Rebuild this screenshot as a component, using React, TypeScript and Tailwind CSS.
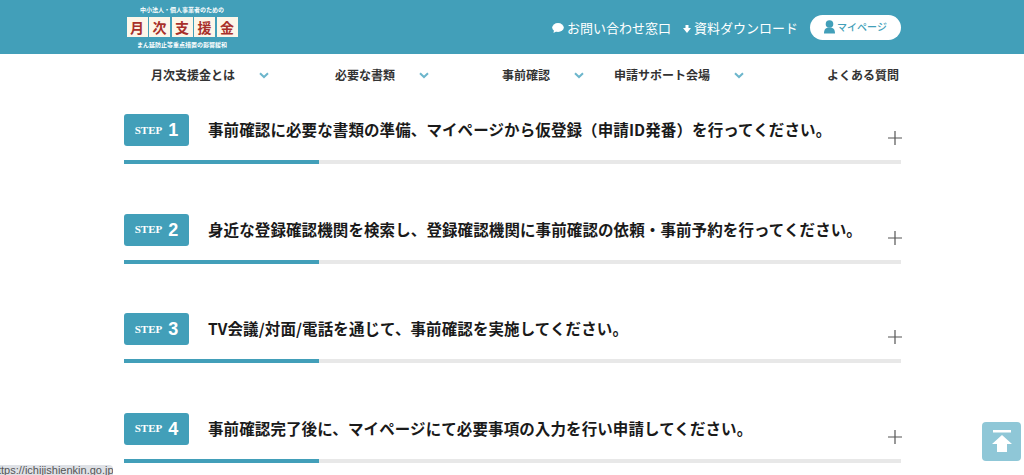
const font = { fontFamily: '"Noto Sans CJK JP", "Noto Sans", sans-serif' };

const logoChars = ["月", "次", "支", "援", "金"];

const navItems = [
  { label: "月次支援金とは", w: "w-[160px]", chevron: true },
  { label: "必要な書類", w: "w-[160px]", chevron: true },
  { label: "事前確認", w: "w-[155px]", chevron: true },
  { label: "申請サポート会場", w: "w-[160px]", chevron: true },
  { label: "よくある質問", w: "w-[160px]", chevron: false },
];

const steps = [
  { n: 1, text: "事前確認に必要な書類の準備、マイページから仮登録（申請ID発番）を行ってください。" },
  { n: 2, text: "身近な登録確認機関を検索し、登録確認機関に事前確認の依頼・事前予約を行ってください。" },
  { n: 3, text: "TV会議/対面/電話を通じて、事前確認を実施してください。" },
  { n: 4, text: "事前確認完了後に、マイページにて必要事項の入力を行い申請してください。" },
];

function Chevron() {
  return (
    <svg width="10" height="7" viewBox="0 0 10 7" className="shrink-0">
      <path d="M1 1.2 L5 5 L9 1.2" fill="none" stroke="#6cb6cc" strokeWidth="2" />
    </svg>
  );
}

function Step({ n, text }: { n: number; text: string }) {
  return (
    <div className="h-[99.5px]">
      <div className="flex h-[32px] items-start">
        <div className="flex h-[32px] w-[65px] shrink-0 items-center justify-center gap-[6px] rounded-[3px] bg-[#429fb9] font-bold text-white">
          <span className="text-[11px] leading-none" style={{ fontFamily: '"Liberation Serif", serif' }}>STEP</span>
          <span className="text-[18px] leading-none" style={{ fontFamily: '"Liberation Sans", sans-serif' }}>{n}</span>
        </div>
        <p className="ml-[19px] flex-1 text-[15.5px] font-bold leading-[30px] tracking-[0.1px] text-[#1a1a1a]">{text}</p>
        <svg width="14" height="14" viewBox="0 0 14 14" className="mt-[17px] mr-[-1px] shrink-0">
          <path d="M7 0 V14 M0 7 H14" stroke="#555" strokeWidth="1.2" />
        </svg>
      </div>
      <div className="mt-[14px] h-[4px] bg-[#e8e8e8]">
        <div className="h-full w-[195px] bg-[#429fb9]" />
      </div>
    </div>
  );
}

export default function App() {
  return (
    <div className="relative h-[475px] w-[1024px] overflow-hidden bg-white" style={font}>
      <header className="h-[54px] bg-[#429fb9]">
        <div className="flex h-full items-center justify-between pl-[124px] pr-[123px]">
          <div className="flex w-[116px] flex-col items-center text-white">
            <span className="text-[6px] font-bold leading-[9px]">中小法人・個人事業者のための</span>
            <div className="mt-[3px] flex gap-[1.5px]">
              {logoChars.map((c) => (
                <span key={c} className="flex h-[20px] w-[21px] items-center justify-center bg-[#fdf6e9] text-[14px] font-bold leading-none text-[#a8302a]">{c}</span>
              ))}
            </div>
            <span className="mt-[3px] text-[6px] font-bold leading-[9px]">まん延防止等重点措置の影響緩和</span>
          </div>
          <div className="flex items-center text-white">
            <svg width="12" height="10" viewBox="0 0 12 10" className="mt-[2px]">
              <ellipse cx="6" cy="4.5" rx="5.8" ry="4.4" fill="#fff" />
              <path d="M2 7 L1.5 10 L5 8 Z" fill="#fff" />
            </svg>
            <span className="ml-[3px] text-[13px] leading-none">お問い合わせ窓口</span>
            <svg width="8" height="8" viewBox="0 0 8 8" className="ml-[12px] mt-[3px]">
              <path d="M2.5 0 H5.5 V3 H8 L4 8 L0 3 H2.5 Z" fill="#fff" />
            </svg>
            <span className="ml-[3px] text-[13px] leading-none">資料ダウンロード</span>
            <div className="ml-[12px] flex h-[25px] w-[91px] items-center justify-center rounded-full bg-white text-[#429fb9]">
              <svg width="11" height="14" viewBox="0 0 11 14">
                <circle cx="5.5" cy="4" r="3.8" fill="#429fb9" />
                <path d="M0 13.5 C0 9 2 7.5 5.5 7.5 C9 7.5 11 9 11 13.5 Z" fill="#429fb9" />
              </svg>
              <span className="ml-[2px] text-[10px] font-medium leading-none">マイページ</span>
            </div>
          </div>
        </div>
      </header>

      <nav className="flex h-[42px] items-center pl-[114px]">
        {navItems.map((it) => (
          <div key={it.label} className={`flex ${it.w} items-center justify-end`}>
            <span className="text-[12px] font-bold leading-none text-[#333]">{it.label}</span>
            {it.chevron ? (
              <span className="ml-[24px] mr-[5px]"><Chevron /></span>
            ) : (
              <span className="mr-[10px]" />
            )}
          </div>
        ))}
      </nav>

      <main className="pl-[124px] pr-[123px] pt-[18px]">
        {steps.map((s) => (
          <Step key={s.n} n={s.n} text={s.text} />
        ))}
      </main>

      <div className="absolute bottom-[14px] right-[3px] flex h-[39px] w-[39px] flex-col items-center justify-center rounded-[4px] bg-[#8fc7d7]">
        <svg width="20" height="24" viewBox="0 0 20 24">
          <rect x="1" y="0" width="18" height="2.5" fill="#fff" />
          <path d="M10 5 L20 14 H15 V22 H5 V14 H0 Z" fill="#fff" />
        </svg>
      </div>

      <div className="absolute bottom-0 left-0 flex h-[10px] w-[113px] items-center overflow-hidden rounded-tr-[4px] bg-[#dee1e6]">
        <span className="ml-[-2px] whitespace-nowrap text-[11px] leading-[10px] text-[#555]" style={{ fontFamily: '"Liberation Sans", sans-serif' }}>ttps://ichijishienkin.go.jp/#</span>
      </div>
    </div>
  );
}
